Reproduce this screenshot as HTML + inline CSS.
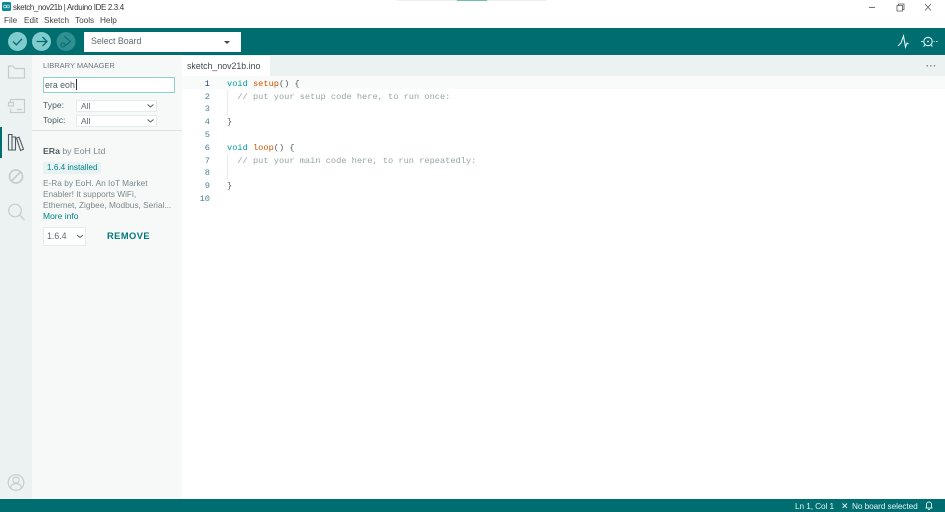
<!DOCTYPE html>
<html><head><meta charset="utf-8">
<style>
html,body{margin:0;padding:0}
body{width:945px;height:512px;overflow:hidden;background:#fff;position:relative;font-family:"Liberation Sans",sans-serif;color:#4e5b61}
#w{position:absolute;left:0;top:0;width:945px;height:512px;filter:blur(.3px);overflow:hidden}
.a{position:absolute;white-space:nowrap}
.code{font-family:"Liberation Mono",monospace;font-size:8.66px;line-height:13px;color:#4e5b61;white-space:pre}
.ln{font-family:"Liberation Mono",monospace;font-size:8.66px;line-height:13px;color:#4a7f94;text-align:right;width:30px;left:180px}
.k{color:#00979d}.f{color:#d35400}.c{color:#95a5a6}
.sel{background:#fff;border:1px solid #e6ebeb;box-sizing:border-box;font-size:8.5px;color:#5f6b70;padding-left:4px;line-height:11px}
.m{top:15px;font-size:8.2px;line-height:11px;color:#444}
</style></head><body><div id="w">
<div class="a" style="left:397px;top:0;width:149px;height:1px;background:#eee"></div>
<div class="a" style="left:457px;top:0;width:30px;height:1px;background:#6fbcb3"></div>
<svg class="a" style="left:2px;top:2px" width="9" height="9" viewBox="0 0 9 9"><rect width="9" height="9" rx="1.5" fill="#0a8a90"/><circle cx="3" cy="4.5" r="1.4" fill="none" stroke="#cdeeee" stroke-width=".7"/><circle cx="6" cy="4.5" r="1.4" fill="none" stroke="#cdeeee" stroke-width=".7"/></svg>
<div class="a" style="left:13px;top:2px;font-size:7.9px;line-height:11px;color:#333;letter-spacing:-.32px">sketch_nov21b | Arduino IDE 2.3.4</div>
<div class="a m" style="left:4px">File</div>
<div class="a m" style="left:24px">Edit</div>
<div class="a m" style="left:44px">Sketch</div>
<div class="a m" style="left:75px">Tools</div>
<div class="a m" style="left:100px">Help</div>
<svg class="a" style="left:868px;top:2px" width="70" height="12" viewBox="0 0 70 12" fill="none" stroke="#555" stroke-width=".8"><path d="M1 5.500H7"/><path d="M29 3.500h5.500v5.500H29zM30.500 3.500V2H36v5.500h-1.500"/><path d="M57 2l6 6.500M63 2l-6 6.500"/></svg>

<div class="a" style="left:0;top:28px;width:945px;height:27px;background:#006d70"></div>
<svg class="a" style="left:0;top:28px" width="80" height="27" viewBox="0 0 80 27" fill="none">
<circle cx="17.500" cy="13.500" r="9.500" fill="#7fcbcd"/><path d="M13 13.500l3.300 3.300 5.700-6" stroke="#006d70" stroke-width="1.300"/>
<circle cx="41.500" cy="13.500" r="9.500" fill="#7fcbcd"/><path d="M36.500 13.500h10M42.500 9l4.500 4.500-4.500 4.500" stroke="#006d70" stroke-width="1.300"/>
<circle cx="66" cy="13.500" r="9.500" fill="#2f8f91"/><path d="M64.500 8.500l6 5-5 4" stroke="#006d70" stroke-width="1"/><circle cx="63" cy="17" r="2" stroke="#006d70" stroke-width="1"/>
</svg>
<div class="a" style="left:84px;top:32px;width:157px;height:20px;background:#fff"></div>
<div class="a" style="left:91px;top:36px;font-size:8.800px;line-height:11px;color:#5f6b70">Select Board</div>
<div class="a" style="left:224px;top:40.500px;width:0;height:0;border-left:3px solid transparent;border-right:3px solid transparent;border-top:3px solid #3f4a4e"></div>
<svg class="a" style="left:895px;top:33px" width="45" height="17" viewBox="0 0 45 17" fill="none" stroke="#dff3f3" stroke-width="1.100"><path d="M3 13l3-3 2.500-7 2 11 1.500-4 1.500 1"/><circle cx="33" cy="8.500" r="4.200"/><circle cx="33" cy="8.500" r=".9" fill="#dff3f3" stroke="none"/><path d="M26 8.500h2M38.500 8.500h1M41 8.500h1.500M30 12l-1.500 1.500M36 12l1.500 1.500"/></svg>

<div class="a" style="left:0;top:55px;width:32px;height:444px;background:#ecf1f1"></div>
<div class="a" style="left:32px;top:55px;width:150px;height:444px;background:#f7f9f9"></div>
<div class="a" style="left:182px;top:55px;width:763px;height:21px;background:#ecf1f1"></div>
<div class="a" style="left:182px;top:56px;width:88px;height:20px;background:#fff"></div>
<div class="a" style="left:187px;top:60px;font-size:8.800px;line-height:12px;color:#3f4a4e">sketch_nov21b.ino</div>
<div class="a" style="left:926px;top:61px;font-size:9px;line-height:10px;color:#6b7679;letter-spacing:.6px;font-weight:bold">···</div>
<div class="a" style="left:182px;top:76px;width:763px;height:13px;background:#f9fbfb"></div>

<svg class="a" style="left:0;top:55px" width="32" height="444" viewBox="0 0 32 444" fill="none" stroke="#c4cdcd" stroke-width="1.200">
<path d="M8.500 11v12h16V13.500H15l-2-2.500z"/>
<path d="M10.500 47.500V44.500h14v13h-14v-4M8.500 47.500h5v3.500h-5zM17 54.500h5"/>
<path d="M8.500 79.500h3.500v15.500H8.500zM12 82h3.500v13H12zM16.500 83l2.500-.8 4.500 12-3 1.300z" stroke="#4e5b61" stroke-width="1.100"/>
<circle cx="16" cy="121.500" r="6.500" stroke-width="1.700"/><path d="M11.500 126l9-9" stroke-width="1.700"/>
<circle cx="15" cy="155.500" r="6.300" stroke-width="1.200"/><path d="M19.500 160l5 5" stroke-width="1.300"/>
<circle cx="16" cy="427.500" r="7.800"/><circle cx="16" cy="425" r="3"/><path d="M10.500 433c.8-3.500 3-4.500 5.500-4.500s4.700 1 5.500 4.500"/>
</svg>
<div class="a" style="left:0;top:127px;width:1.500px;height:31px;background:#006d70"></div>

<div class="a" style="left:43px;top:60px;font-size:7.500px;line-height:11px;color:#6b7679">LIBRARY MANAGER</div>
<div class="a" style="left:43px;top:77px;width:132px;height:16px;box-sizing:border-box;background:#fff;border:1px solid #8fd0d0"></div>
<div class="a" style="left:45px;top:79px;font-size:8.800px;line-height:12px;color:#4e5b61">era eoh</div>
<div class="a" style="left:76px;top:79px;width:1px;height:11px;background:#333"></div>
<div class="a" style="left:43px;top:99px;font-size:8.600px;line-height:12px;color:#4e5b61">Type:</div>
<div class="a" style="left:43px;top:114px;font-size:8.600px;line-height:12px;color:#4e5b61">Topic:</div>
<div class="a sel" style="left:76px;top:100px;width:81px;height:12px">All</div>
<div class="a sel" style="left:76px;top:115px;width:81px;height:12px">All</div>
<svg class="a" style="left:146px;top:103px" width="9" height="21" viewBox="0 0 9 21" fill="none" stroke="#4e5b61" stroke-width="1"><path d="M1.500 1.500l3 2.500 3-2.500M1.500 16.500l3 2.500 3-2.500"/></svg>
<div class="a" style="left:32px;top:130px;width:150px;height:1px;background:#dde3e3"></div>

<div class="a" style="left:43px;top:145px;font-size:8.700px;line-height:12px;color:#7c878a"><b style="color:#4e5b61">ERa</b> by EoH Ltd</div>
<div class="a" style="left:43px;top:162px;width:58px;height:12px;background:#e8f2f2;border-radius:2px"></div>
<div class="a" style="left:47px;top:162px;font-size:8.200px;line-height:12px;color:#00838a">1.6.4 installed</div>
<div class="a" style="left:43px;top:178px;font-size:8.300px;line-height:10.800px;color:#7c878a">E-Ra by EoH. An IoT Market<br>Enabler! It supports WiFi,<br>Ethernet, Zigbee, Modbus, Serial...</div>
<div class="a" style="left:43px;top:210px;font-size:8.500px;line-height:12px;color:#00838a">More info</div>
<div class="a sel" style="left:43px;top:227px;width:43px;height:19px;line-height:17px;padding-left:3px;font-size:8.800px">1.6.4</div>
<svg class="a" style="left:76px;top:234px" width="9" height="6" viewBox="0 0 9 6" fill="none" stroke="#4e5b61" stroke-width="1"><path d="M1 1l3 2.500 3-2.500"/></svg>
<div class="a" style="left:107px;top:230px;font-size:9.300px;line-height:12px;font-weight:bold;color:#00787c;letter-spacing:.45px">REMOVE</div>

<div class="a ln" style="top:78px;color:#2c3e66">1</div>
<div class="a ln" style="top:91px">2</div>
<div class="a ln" style="top:103px">3</div>
<div class="a ln" style="top:116px">4</div>
<div class="a ln" style="top:129px">5</div>
<div class="a ln" style="top:142px">6</div>
<div class="a ln" style="top:155px">7</div>
<div class="a ln" style="top:167px">8</div>
<div class="a ln" style="top:180px">9</div>
<div class="a ln" style="top:193px">10</div>
<div class="a" style="left:227px;top:90px;width:1px;height:26px;background:#e8ecec"></div>
<div class="a" style="left:227px;top:154px;width:1px;height:26px;background:#e8ecec"></div>
<div class="a code" style="left:227px;top:78px"><span class="k">void</span> <span class="f">setup</span>() {</div>
<div class="a code c" style="left:227px;top:91px">  // put your setup code here, to run once:</div>
<div class="a code" style="left:227px;top:116px">}</div>
<div class="a code" style="left:227px;top:142px"><span class="k">void</span> <span class="f">loop</span>() {</div>
<div class="a code c" style="left:227px;top:155px">  // put your main code here, to run repeatedly:</div>
<div class="a code" style="left:227px;top:180px">}</div>

<div class="a" style="left:0;top:499px;width:945px;height:13px;background:#006d70"></div>
<div class="a" style="left:795px;top:500px;font-size:8.300px;line-height:12px;color:#e4f3f3;letter-spacing:-.1px">Ln 1, Col 1</div>
<svg class="a" style="left:841px;top:502px" width="8" height="8" viewBox="0 0 8 8" fill="none" stroke="#e4f3f3" stroke-width=".9"><path d="M1.500 1.500l4.500 4.500M6 1.500l-4.500 4.500"/></svg>
<div class="a" style="left:852px;top:500px;font-size:8.300px;line-height:12px;color:#e4f3f3;letter-spacing:-.1px">No board selected</div>
<svg class="a" style="left:924px;top:500px" width="10" height="11" viewBox="0 0 10 11" fill="none" stroke="#e4f3f3" stroke-width=".9"><path d="M1.500 8h7M2.500 8V4.500a2.500 2.500 0 0 1 5 0V8M4 9.500h2"/></svg>
</div></body></html>
